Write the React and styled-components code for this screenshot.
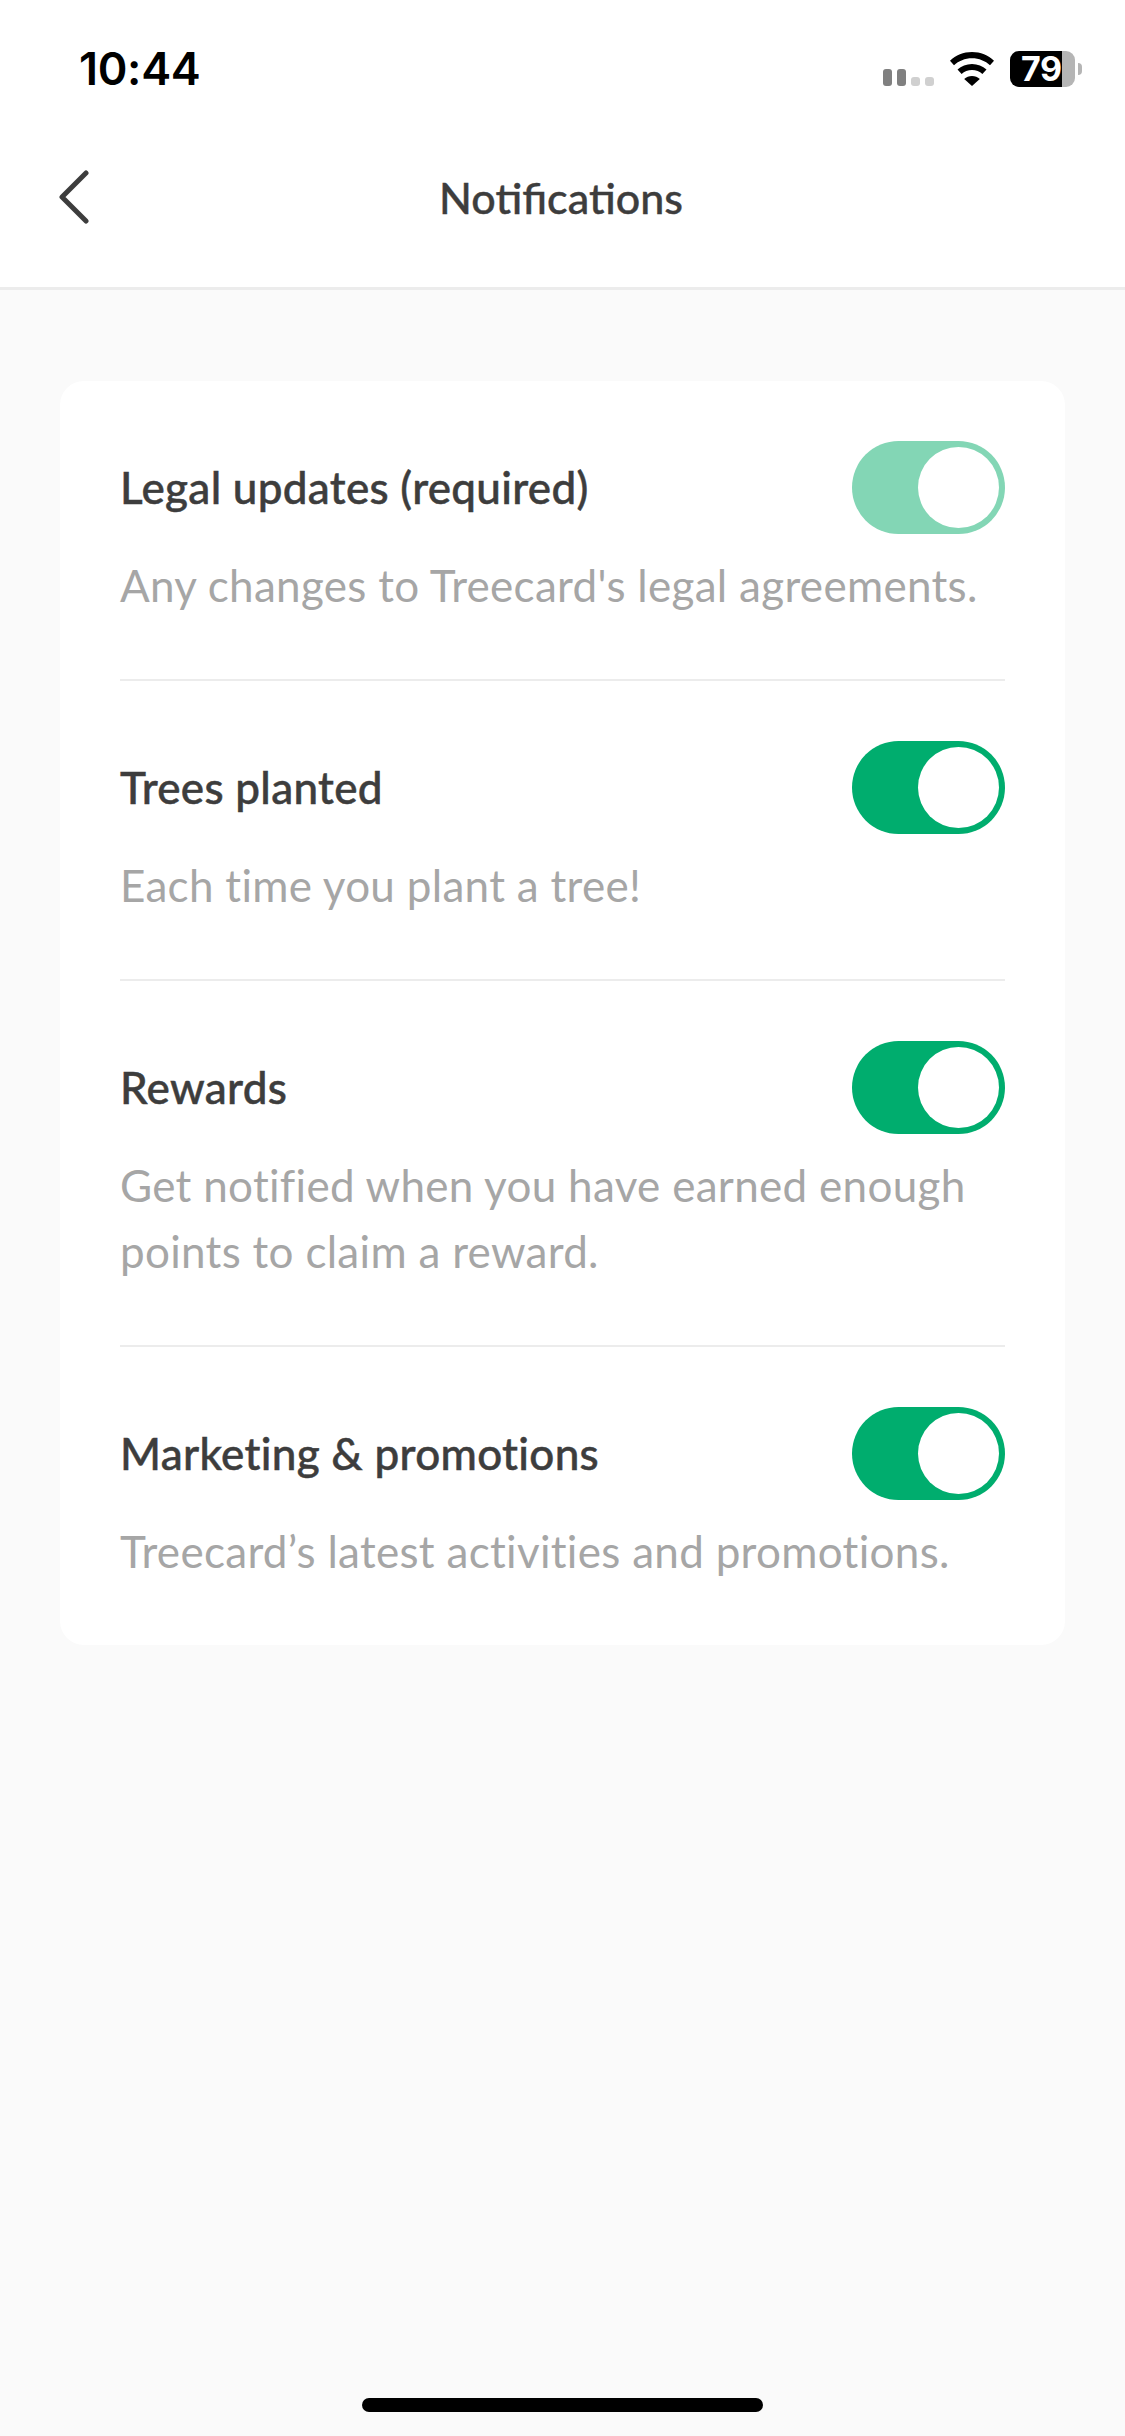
import React from 'react';
import styled, { createGlobalStyle } from 'styled-components';

const GlobalStyle = createGlobalStyle`
  html, body {
    margin: 0;
    padding: 0;
    background: #fafafa;
  }
  * {
    box-sizing: border-box;
  }
`;

const Page = styled.div`
  width: 1125px;
  height: 2436px;
  display: flex;
  flex-direction: column;
  background: #fafafa;
  font-family: Lato, "Noto Sans", sans-serif;
  overflow: hidden;
`;

const TopArea = styled.header`
  background: #fff;
  border-bottom: 3px solid #ececec;
  height: 290px;
`;

const StatusBar = styled.div`
  height: 136px;
  padding: 47px 43px 0 79px;
  display: flex;
  justify-content: space-between;
  align-items: flex-start;
`;

const Time = styled.span`
  font-family: Inter, sans-serif;
  font-size: 45px;
  line-height: 44px;
  font-weight: 600;
  letter-spacing: -0.3px;
  color: #000;
`;

const StatusIcons = styled.div`
  display: flex;
  align-items: center;
  margin-top: 4px;
`;

const Signal = styled.div`
  display: flex;
  align-items: flex-end;
  gap: 5px;
  height: 17px;
  margin-top: 17px;
  margin-right: 15px;
`;

const SignalBar = styled.i`
  display: block;
  width: 9px;
  height: ${p => (p.$on ? 17 : 9)}px;
  border-radius: 3px;
  background: ${p => (p.$on ? '#808080' : '#d0d0d0')};
`;

const Battery = styled.div`
  width: 65px;
  height: 36px;
  margin-left: 15px;
  border-radius: 9px;
  background: linear-gradient(to right, #000 52px, #b5b5b5 52px);
  color: #fff;
  font-family: Inter, sans-serif;
  font-size: 34px;
  font-weight: 700;
  line-height: 36px;
  letter-spacing: -0.5px;
  white-space: nowrap;
  padding-left: 11px;
`;

const BatteryCap = styled.i`
  display: block;
  width: 4px;
  height: 12px;
  margin-left: 3px;
  border-radius: 0 6px 6px 0;
  background: #b5b5b5;
`;

const NavBar = styled.div`
  position: relative;
  height: 151px;
  display: flex;
  align-items: center;
  justify-content: center;
`;

const BackButton = styled.button`
  position: absolute;
  left: 57px;
  top: 34px;
  padding: 0;
  border: 0;
  background: none;
  display: flex;
`;

const Title = styled.h1`
  margin: 0 0 28px -3px;
  font-size: 43px;
  line-height: 50px;
  font-weight: 500;
  -webkit-text-stroke: 0.4px #3d3d3d;
  color: #3d3d3d;
`;

const Card = styled.section`
  margin: 91px 60px 0;
  padding: 0 60px;
  background: #fff;
  border-radius: 24px;
`;

const Row = styled.div`
  padding: 60px 0 61px;
  border-bottom: ${p => (p.$last ? '0' : '2px solid #ececec')};
`;

const RowHead = styled.div`
  display: flex;
  align-items: center;
  justify-content: space-between;
  height: 93px;
  margin-bottom: 18px;
`;

const Label = styled.span`
  font-size: 44px;
  font-weight: 500;
  letter-spacing: 0.3px;
  -webkit-text-stroke: 0.5px #3d3d3d;
  color: #3d3d3d;
  margin-top: -2px;
`;

const Description = styled.p`
  margin: 0;
  font-size: 44px;
  line-height: 66px;
  letter-spacing: 0.3px;
  color: #a6a6a6;
`;

const Toggle = styled.div`
  width: 153px;
  height: 93px;
  padding: 6px;
  border-radius: 47px;
  display: flex;
  justify-content: flex-end;
  background: ${p => (p.$disabled ? '#83d6b5' : '#00ad6e')};
`;

const Knob = styled.div`
  width: 81px;
  height: 81px;
  border-radius: 50%;
  background: #fff;
`;

const HomeBar = styled.div`
  width: 401px;
  height: 14px;
  margin: auto auto 24px;
  border-radius: 7px;
  background: #000;
`;

const settings = [
  { label: 'Legal updates (required)', text: "Any changes to Treecard's legal agreements.", disabled: true },
  { label: 'Trees planted', text: 'Each time you plant a tree!' },
  { label: 'Rewards', text: 'Get notified when you have earned enough points to claim a reward.' },
  { label: 'Marketing & promotions', text: 'Treecard’s latest activities and promotions.' },
];

export default function App() {
  return (
    <Page>
      <GlobalStyle />
      <TopArea>
        <StatusBar>
          <Time>10:44</Time>
          <StatusIcons>
            <Signal>
              <SignalBar $on />
              <SignalBar $on />
              <SignalBar />
              <SignalBar />
            </Signal>
            <svg width="46" height="34" viewBox="0 0 46 34">
              <path d="M23 0C14.5 0 6.7 3.3 1 8.7l4 4.5C9.6 8.900 16 6.200 23 6.200s13.400 2.700 18 7l4-4.500C39.300 3.300 31.500 0 23 0z" fill="#000" />
              <path d="M23 12c-5.600 0-10.700 2.100-14.500 5.600l4.100 4.500c2.700-2.500 6.400-4 10.400-4s7.700 1.500 10.400 4l4.100-4.500C33.700 14.100 28.600 12 23 12z" fill="#000" />
              <path d="M23 24c-3 0-5.700 1.100-7.800 3L23 34l7.800-7c-2.100-1.900-4.800-3-7.800-3z" fill="#000" />
            </svg>
            <Battery>79</Battery>
            <BatteryCap />
          </StatusIcons>
        </StatusBar>
        <NavBar>
          <BackButton aria-label="Back">
            <svg width="32" height="54" viewBox="0 0 32 54">
              <path d="M29 3L5 27l24 24" fill="none" stroke="#3d3d3d" strokeWidth="5" strokeLinecap="round" strokeLinejoin="round" />
            </svg>
          </BackButton>
          <Title>Notifications</Title>
        </NavBar>
      </TopArea>
      <Card>
        {settings.map((item, i) => (
          <Row key={item.label} $last={i === settings.length - 1}>
            <RowHead>
              <Label>{item.label}</Label>
              <Toggle $disabled={item.disabled}>
                <Knob />
              </Toggle>
            </RowHead>
            <Description>{item.text}</Description>
          </Row>
        ))}
      </Card>
      <HomeBar />
    </Page>
  );
}
